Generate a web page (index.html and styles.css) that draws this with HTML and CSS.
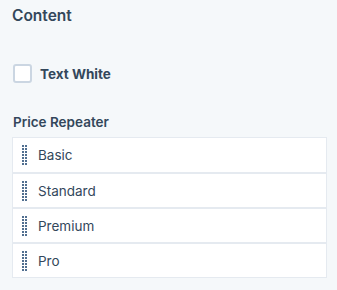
FILE: index.html
```html
<!DOCTYPE html>
<html lang="en">
<head>
    <meta charset="UTF-8">
    <meta name="viewport" content="width=device-width, initial-scale=1.0">
    <title>Content fields</title>
    <link rel="stylesheet" href="styles.css">
</head>
<body>
    <div class="panel">
        <h2 class="panel__title">Content</h2>

        <label class="check">
            <span class="check__box"></span>
            <span class="check__label">Text White</span>
        </label>

        <h3 class="field__title">Price Repeater</h3>
        <ul class="repeater">
            <li class="repeater__item">
                <svg class="handle" width="5" height="20" viewBox="0 0 5 20">
                    <defs>
                        <pattern id="dots" width="3" height="3" patternUnits="userSpaceOnUse">
                            <rect width="2" height="2" fill="#516f90"/>
                        </pattern>
                    </defs>
                    <rect width="5" height="20" fill="url(#dots)"/>
                </svg>
                <span>Basic</span>
            </li>
            <li class="repeater__item">
                <svg class="handle" width="5" height="20" viewBox="0 0 5 20"><rect width="5" height="20" fill="url(#dots)"/></svg>
                <span>Standard</span>
            </li>
            <li class="repeater__item">
                <svg class="handle" width="5" height="20" viewBox="0 0 5 20"><rect width="5" height="20" fill="url(#dots)"/></svg>
                <span>Premium</span>
            </li>
            <li class="repeater__item">
                <svg class="handle" width="5" height="20" viewBox="0 0 5 20"><rect width="5" height="20" fill="url(#dots)"/></svg>
                <span>Pro</span>
            </li>
        </ul>
    </div>
</body>
</html>
```

FILE: styles.css
```css
*{
    padding: 0;
    margin: 0;
    box-sizing: border-box;
}
body{
    background-color: #f5f8fa;
    font-family: "Inter", "Liberation Sans", sans-serif;
    color: #33475b;
}
.panel{
    padding: 6px 10px 0 12px;
}
.panel__title{
    font-size: 15.5px;
    font-weight: 600;
    line-height: 20px;
}
.check{
    display: flex;
    align-items: center;
    gap: 8px;
    margin-top: 38px;
    margin-left: 1px;
}
.check__box{
    width: 19px;
    height: 19px;
    background-color: #fff;
    border: 2px solid #cbd6e2;
    border-radius: 3px;
}
.check__label{
    font-size: 13.5px;
    font-weight: 700;
}
.field__title{
    font-size: 13.5px;
    font-weight: 600;
    line-height: 18px;
    margin-top: 30px;
    margin-left: 1px;
}
.repeater{
    list-style: none;
    margin-top: 6px;
    background-color: #fff;
    border: 1px solid #e5eaf0;
}
.repeater__item{
    display: flex;
    align-items: center;
    gap: 11px;
    height: 35px;
    padding-left: 9px;
    font-size: 13.5px;
    border-top: 2px solid #e5eaf0;
}
.repeater__item:first-child{
    border-top: none;
    height: 34px;
}
.handle{
    flex-shrink: 0;
}
```
